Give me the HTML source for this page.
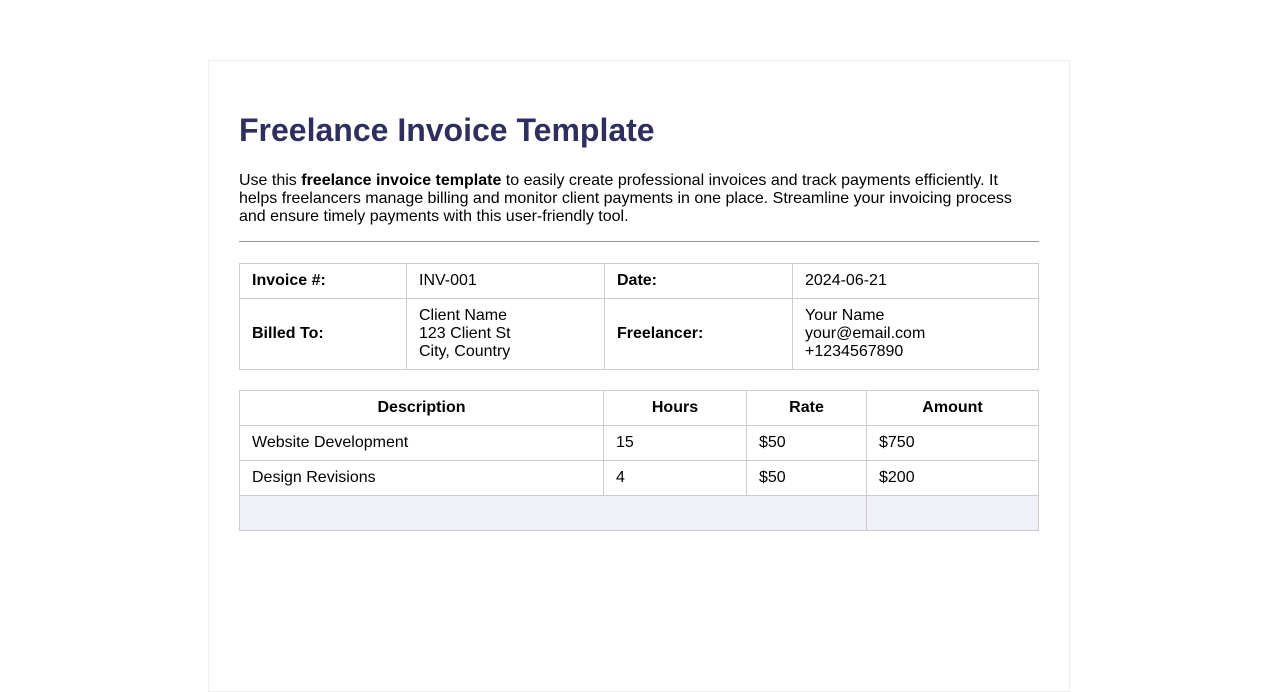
<!DOCTYPE html>
<html><head><meta charset="utf-8"><style>
html,body{margin:0;height:501px;overflow:hidden;}
body{background:#fff;font-family:"Liberation Sans",Arial,sans-serif;color:#000;}
.c{position:absolute;left:208px;top:60px;width:800px;padding:0 30px 30px;border:1px solid #eee;height:600px;}
h1{font-size:32px;color:#2f2f5f;margin:51px 0 23px;line-height:37px;}
p{font-size:16px;line-height:18px;margin:0 0 15px;}
hr{border:0;border-top:1px solid #999;margin:0 0 20px;height:1px;background:none;}
table{border-collapse:collapse;width:800px;font-size:16px;margin-bottom:20px;}
td,th{border:1px solid #ccc;padding:0 12px;height:34px;text-align:left;vertical-align:middle;line-height:18px;}
th{text-align:center;}
.r2 td{height:70px;}
</style></head><body>
<div class="c">
<h1>Freelance Invoice Template</h1>
<p>Use this <b>freelance invoice template</b> to easily create professional invoices and track payments efficiently. It helps freelancers manage billing and monitor client payments in one place. Streamline your invoicing process and ensure timely payments with this user-friendly tool.</p>
<hr>
<table>
<colgroup><col style="width:167px"><col style="width:198px"><col style="width:188px"><col></colgroup>
<tr><td><b>Invoice #:</b></td><td>INV-001</td><td><b>Date:</b></td><td>2024-06-21</td></tr>
<tr class="r2"><td><b>Billed To:</b></td><td>Client Name<br>123 Client St<br>City, Country</td><td><b>Freelancer:</b></td><td>Your Name<br>your@email.com<br>+1234567890</td></tr>
</table>
<table>
<colgroup><col style="width:364px"><col style="width:143px"><col style="width:120px"><col></colgroup>
<tr><th>Description</th><th>Hours</th><th>Rate</th><th>Amount</th></tr>
<tr><td>Website Development</td><td>15</td><td>$50</td><td>$750</td></tr>
<tr><td>Design Revisions</td><td>4</td><td>$50</td><td>$200</td></tr>
<tr style="background:#f0f0f8"><td colspan="3"></td><td></td></tr>
</table>
</div>
</body></html>
